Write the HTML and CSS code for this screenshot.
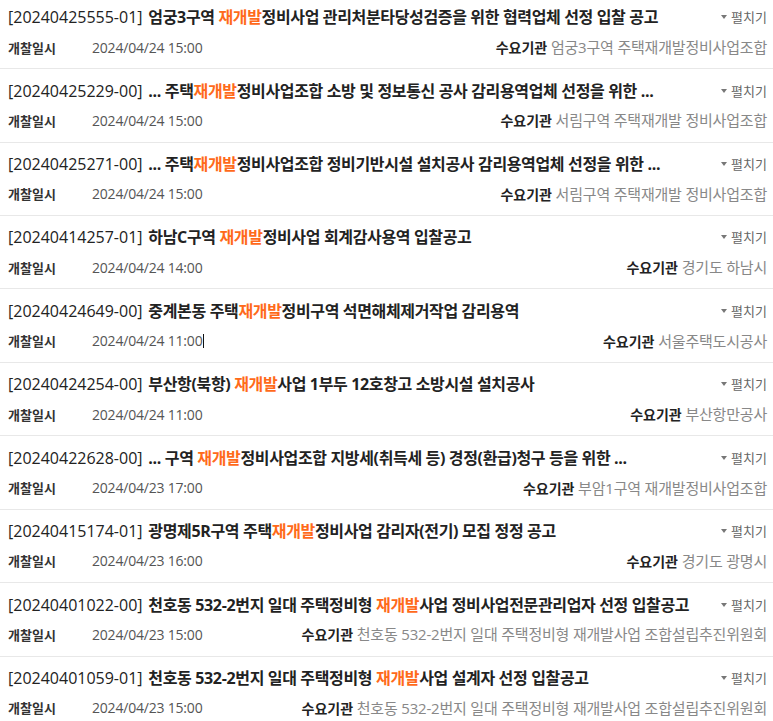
FILE: index.html
```html
<!DOCTYPE html>
<html lang="ko">
<head>
<meta charset="utf-8">
<title>입찰공고 목록</title>
<link rel="stylesheet" href="styles.css">
</head>
<body>
<ul class="list">
  <li class="item">
    <div class="head">
      <div class="title"><span class="num">[20240425555-01]</span> 엄궁3구역 <em class="hl">재개발</em>정비사업 관리처분타당성검증을 위한 협력업체 선정 입찰 공고</div>
      <div class="toggle"><i class="tri"></i>펼치기</div>
    </div>
    <div class="meta">
      <span class="label">개찰일시</span><span class="date">2024/04/24 15:00</span>
      <span class="org"><b>수요기관</b> 엄궁3구역 주택재개발정비사업조합</span>
    </div>
  </li>
  <li class="item">
    <div class="head">
      <div class="title"><span class="num">[20240425229-00]</span> ... 주택<em class="hl">재개발</em>정비사업조합 소방 및 정보통신 공사 감리용역업체 선정을 위한 ...</div>
      <div class="toggle"><i class="tri"></i>펼치기</div>
    </div>
    <div class="meta">
      <span class="label">개찰일시</span><span class="date">2024/04/24 15:00</span>
      <span class="org"><b>수요기관</b> 서림구역 주택재개발 정비사업조합</span>
    </div>
  </li>
  <li class="item">
    <div class="head">
      <div class="title"><span class="num">[20240425271-00]</span> ... 주택<em class="hl">재개발</em>정비사업조합 정비기반시설 설치공사 감리용역업체 선정을 위한 ...</div>
      <div class="toggle"><i class="tri"></i>펼치기</div>
    </div>
    <div class="meta">
      <span class="label">개찰일시</span><span class="date">2024/04/24 15:00</span>
      <span class="org"><b>수요기관</b> 서림구역 주택재개발 정비사업조합</span>
    </div>
  </li>
  <li class="item">
    <div class="head">
      <div class="title"><span class="num">[20240414257-01]</span> 하남C구역 <em class="hl">재개발</em>정비사업 회계감사용역 입찰공고</div>
      <div class="toggle"><i class="tri"></i>펼치기</div>
    </div>
    <div class="meta">
      <span class="label">개찰일시</span><span class="date">2024/04/24 14:00</span>
      <span class="org"><b>수요기관</b> 경기도 하남시</span>
    </div>
  </li>
  <li class="item">
    <div class="head">
      <div class="title"><span class="num">[20240424649-00]</span> 중계본동 주택<em class="hl">재개발</em>정비구역 석면해체제거작업 감리용역</div>
      <div class="toggle"><i class="tri"></i>펼치기</div>
    </div>
    <div class="meta">
      <span class="label">개찰일시</span><span class="date">2024/04/24 11:00</span><span class="caret"></span>
      <span class="org"><b>수요기관</b> 서울주택도시공사</span>
    </div>
  </li>
  <li class="item">
    <div class="head">
      <div class="title"><span class="num">[20240424254-00]</span> 부산항(북항) <em class="hl">재개발</em>사업 1부두 12호창고 소방시설 설치공사</div>
      <div class="toggle"><i class="tri"></i>펼치기</div>
    </div>
    <div class="meta">
      <span class="label">개찰일시</span><span class="date">2024/04/24 11:00</span>
      <span class="org"><b>수요기관</b> 부산항만공사</span>
    </div>
  </li>
  <li class="item">
    <div class="head">
      <div class="title"><span class="num">[20240422628-00]</span> ... 구역 <em class="hl">재개발</em>정비사업조합 지방세(취득세 등) 경정(환급)청구 등을 위한 ...</div>
      <div class="toggle"><i class="tri"></i>펼치기</div>
    </div>
    <div class="meta">
      <span class="label">개찰일시</span><span class="date">2024/04/23 17:00</span>
      <span class="org"><b>수요기관</b> 부암1구역 재개발정비사업조합</span>
    </div>
  </li>
  <li class="item">
    <div class="head">
      <div class="title"><span class="num">[20240415174-01]</span> 광명제5R구역 주택<em class="hl">재개발</em>정비사업 감리자(전기) 모집 정정 공고</div>
      <div class="toggle"><i class="tri"></i>펼치기</div>
    </div>
    <div class="meta">
      <span class="label">개찰일시</span><span class="date">2024/04/23 16:00</span>
      <span class="org"><b>수요기관</b> 경기도 광명시</span>
    </div>
  </li>
  <li class="item">
    <div class="head">
      <div class="title"><span class="num">[20240401022-00]</span> 천호동 532-2번지 일대 주택정비형 <em class="hl">재개발</em>사업 정비사업전문관리업자 선정 입찰공고</div>
      <div class="toggle"><i class="tri"></i>펼치기</div>
    </div>
    <div class="meta">
      <span class="label">개찰일시</span><span class="date">2024/04/23 15:00</span>
      <span class="org"><b>수요기관</b> 천호동 532-2번지 일대 주택정비형 재개발사업 조합설립추진위원회</span>
    </div>
  </li>
  <li class="item">
    <div class="head">
      <div class="title"><span class="num">[20240401059-01]</span> 천호동 532-2번지 일대 주택정비형 <em class="hl">재개발</em>사업 설계자 선정 입찰공고</div>
      <div class="toggle"><i class="tri"></i>펼치기</div>
    </div>
    <div class="meta">
      <span class="label">개찰일시</span><span class="date">2024/04/23 15:00</span>
      <span class="org"><b>수요기관</b> 천호동 532-2번지 일대 주택정비형 재개발사업 조합설립추진위원회</span>
    </div>
  </li>
</ul>
</body>
</html>
```

FILE: styles.css
```css
html, body {
  margin: 0;
  padding: 0;
  background: #ffffff;
}

body {
  font-family: "Open Sans", "Noto Sans CJK KR", sans-serif;
  color: #222222;
  overflow: hidden;
}

.list {
  list-style: none;
  margin: -4.3px 0 0 0;
  padding: 0;
}

.item {
  padding: 10.5px 6px 10.64px 8px;
  border-bottom: 1px solid #e8e8e8;
}

.head {
  display: flex;
  align-items: center;
  height: 22px;
}

.title {
  flex: 1;
  min-width: 0;
  white-space: nowrap;
  overflow: hidden;
  font-size: 16px;
  line-height: 22px;
  font-weight: 700;
  letter-spacing: -0.35px;
  color: #222222;
}

.num {
  font-size: 16px;
  font-weight: 400;
  letter-spacing: 0;
  margin-right: 2px;
  color: #222222;
}

.hl {
  font-style: normal;
  color: #ff6a1a;
}

.toggle {
  display: flex;
  align-items: center;
  gap: 4px;
  font-size: 13px;
  line-height: 16px;
  color: #666666;
  letter-spacing: 0;
  margin-left: 12px;
}

.tri {
  display: block;
  width: 0;
  height: 0;
  border-left: 3px solid transparent;
  border-right: 3px solid transparent;
  border-top: 4px solid #777777;
}

.meta {
  display: flex;
  align-items: center;
  height: 20px;
  margin-top: 9.3px;
  line-height: 20px;
}

.label {
  width: 84px;
  flex: none;
  font-size: 13px;
  font-weight: 700;
  letter-spacing: 0;
  color: #333333;
}

.date {
  font-size: 14px;
  letter-spacing: -0.2px;
  color: #555555;
}

.caret {
  display: inline-block;
  width: 1px;
  height: 14px;
  margin-left: 1px;
  background: #111111;
}

.org {
  margin-left: auto;
  font-size: 15px;
  letter-spacing: -0.2px;
  color: #888888;
  white-space: nowrap;
}

.org b {
  font-size: 14px;
  font-weight: 700;
  letter-spacing: 0;
  color: #222222;
}
```
